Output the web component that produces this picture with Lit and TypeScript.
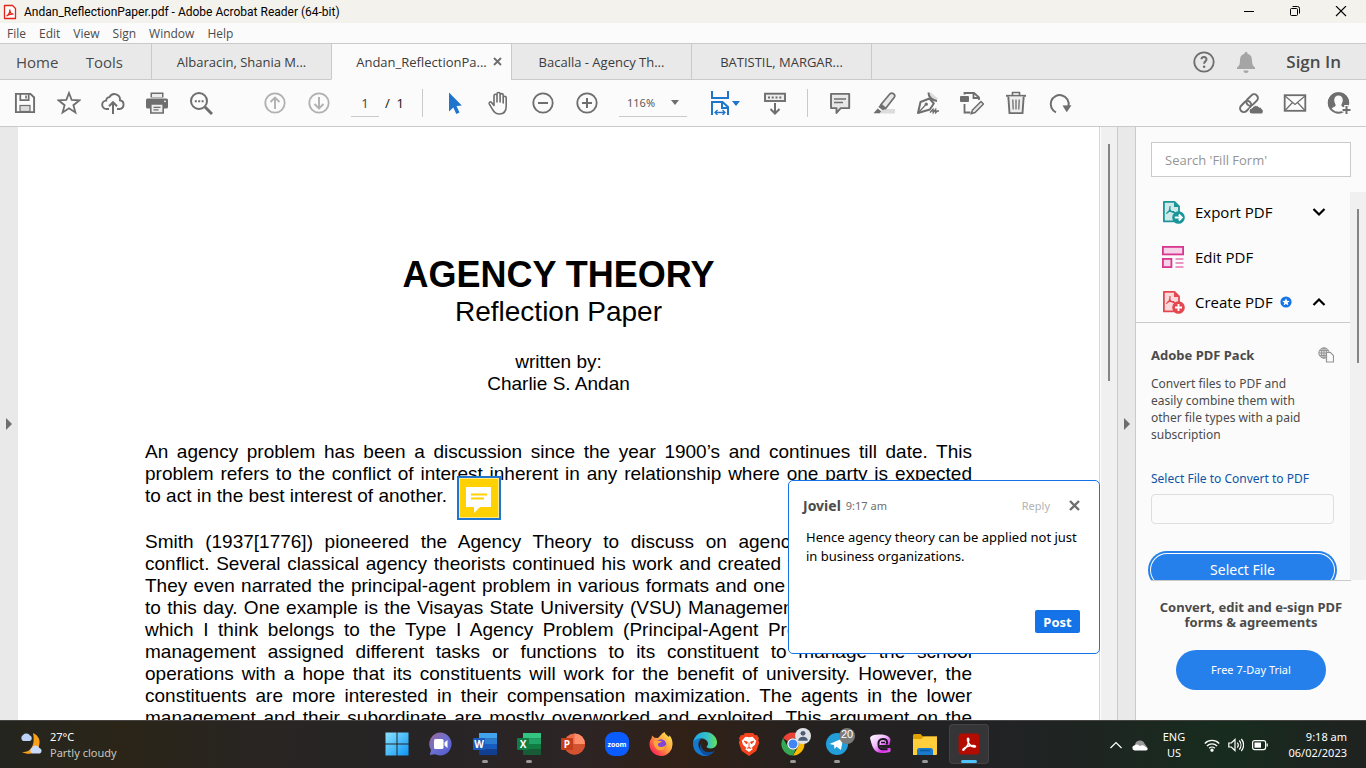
import { LitElement, html, svg, css } from "lit";
import { customElement } from "lit/decorators.js";
import { classMap } from "lit/directives/class-map.js";

const G = "#6e6e6e";

const icon = (body: unknown, size = 24) =>
  html`<svg class="icon" width=${size} height=${size} viewBox="0 0 24 24" fill="none" aria-hidden="true">${body}</svg>`;

const icons = {
  save: svg`<path d="M2.9 2.9h14.6l3.6 3.6v14.6H2.9z" stroke=${G} stroke-width="1.9"/><path d="M7.3 3v6.2h8.4V3" stroke=${G} stroke-width="1.7"/><path d="M13 4.5v3" stroke=${G} stroke-width="1.6"/><rect x="7" y="14.5" width="10" height="6" fill="#dcdcdc" stroke=${G} stroke-width="1.2"/>`,
  star: svg`<path d="M12 2l2.7 7 7.6.4-5.9 4.8 2 7.3-6.4-4.2-6.4 4.2 2-7.3L1.700 9.400l7.600-.4z" stroke=${G} stroke-width="1.8" stroke-linejoin="miter"/>`,
  cloud: svg`<path d="M8 18H5.600a4.200 4.200 0 0 1-.4-8.400 3.400 3.400 0 0 1 3.300-3.500 5.600 5.600 0 0 1 10.500 3.200A4.400 4.400 0 0 1 18.500 18H16" stroke=${G} stroke-width="1.9"/><path d="M12 23V11.500M8 15.200l4-4 4 4" stroke=${G} stroke-width="2"/>`,
  print: svg`<path d="M5.500 1.500h13v5h-13z" fill=${G}/><path d="M7 3h10v3H7z" fill="#ededed"/><rect x="1" y="7.500" width="22" height="10" rx="1.500" fill=${G}/><path d="M5.800 13h12.400v9H5.800z" fill="#ededed" stroke=${G} stroke-width="1.600"/><path d="M8.500 16.300h7M8.500 18.900h5" stroke=${G} stroke-width="1.200"/><circle cx="20" cy="10.300" r=".9" fill="#fff"/>`,
  find: svg`<circle cx="10" cy="10" r="8" stroke=${G} stroke-width="2"/><path d="M16 16l7 7" stroke=${G} stroke-width="3"/><path d="M5.800 9.200h2v2h-2zM9.200 9.200h2v2h-2zM12.600 9.200h2v2h-2z" fill=${G}/>`,
  up: svg`<circle cx="12" cy="12" r="9.700" stroke="#b1b1b1" stroke-width="1.800"/><path d="M12 18V7M7.500 11L12 6.500l4.500 4.500" stroke="#b1b1b1" stroke-width="1.900"/>`,
  down: svg`<circle cx="12" cy="12" r="9.700" stroke="#b1b1b1" stroke-width="1.800"/><path d="M12 6v11M7.500 13l4.500 4.500 4.500-4.500" stroke="#b1b1b1" stroke-width="1.900"/>`,
  cursor: svg`<path d="M6 1.500v19l4.300-4 3 6.500 3.200-1.400-3-6.500 5.300-.5z" fill="#1f74cb"/>`,
  hand: svg`<path d="M7 14.500V4.800a1.500 1.500 0 0 1 3 0V11 3a1.500 1.500 0 0 1 3.100 0v8-6.800a1.500 1.500 0 0 1 3.100 0V12 6.700a1.500 1.500 0 0 1 3 0V15c0 5-2.600 8-6.700 8-3.600 0-5.500-1.700-7-4.700L2.200 12.800c-.6-1.500 1.200-2.600 2.300-1.300z" stroke=${G} stroke-width="1.600" stroke-linejoin="round"/>`,
  minus: svg`<circle cx="12" cy="12" r="9.700" stroke=${G} stroke-width="1.800"/><path d="M7 12h10" stroke=${G} stroke-width="2"/>`,
  plus: svg`<circle cx="12" cy="12" r="9.700" stroke=${G} stroke-width="1.800"/><path d="M7 12h10M12 7v10" stroke=${G} stroke-width="2"/>`,
  fit: svg`<path d="M4 0v7h16V0" stroke="#1f74cb" stroke-width="2"/><path d="M4 24V11h10.500l5.500 5V24M14 11.500V17h6" stroke="#1f74cb" stroke-width="2"/><path d="M7 21.500h10M9.500 19L7 21.500 9.500 24M14.500 19l2.500 2.500-2.500 2.500" stroke="#1f74cb" stroke-width="1.300"/>`,
  scroll: svg`<rect x="2" y="2.700" width="20" height="7.300" stroke=${G} stroke-width="1.900" fill="#eee"/><path d="M5 6.400h2M8.700 6.400h2M12.500 6.400h2M16.300 6.400h2" stroke=${G} stroke-width="2"/><path d="M12 12v10M7.500 18l4.500 4.500 4.500-4.500" stroke=${G} stroke-width="2"/>`,
  comment: svg`<path d="M3 2.900h18.200v14.200h-8.500L8.500 22v-4.900H3z" fill="#e8e8e8" stroke=${G} stroke-width="1.900" stroke-linejoin="round"/><path d="M6 8h12M6 11.500h9" stroke=${G} stroke-width="1.400"/>`,
  marker: svg`<path d="M11.500 18H23v4.500H5z" fill="#dcdcdc"/><path d="M9 13.500l9-10.700c2-2 6 .8 4.300 3.400l-8.700 11.300z" fill="#e8e8e8" stroke=${G} stroke-width="1.700"/><path d="M8.500 13.500l5.300 4.200-3 1.600-4.500-3.300z" fill=${G}/><path d="M5.700 17.500l3.500 2.700-1.700 2H1.500z" fill=${G}/>`,
  sign: svg`<path d="M14 1l8 6.500-3 3-7-6z" fill="#dcdcdc"/><path d="M2 22L4.500 11l9-3.500 4.300 5-4 6z" stroke=${G} stroke-width="2" stroke-linejoin="round"/><path d="M12.500 1.500c-.3 4 3.500 8 8.500 8.500" stroke=${G} stroke-width="2"/><path d="M2.500 21.500l7-7.500" stroke=${G} stroke-width="1.300"/><circle cx="10.300" cy="13.200" r="1.600" fill=${G}/><path d="M14 21.500l3-3 .3 3 2.300-3 .2 3 1.500-1.500H23" stroke=${G} stroke-width="1.500"/>`,
  organize: svg`<rect x="0" y="5" width="9" height="6" rx="1" fill=${G}/><path d="M4.500 3.500V2h9.500l5 4.500V9M13.500 2.200V7H19M4.500 13v8.500h6" stroke=${G} stroke-width="1.800"/><path d="M12.500 19l8.500-8.500 2.500 2.500-8.500 8.500-3.700 1.200z" fill="#e8e8e8" stroke=${G} stroke-width="1.500"/>`,
  trash: svg`<path d="M2 4.800h20" stroke=${G} stroke-width="1.900"/><path d="M8.500 4.500v-3h7v3" stroke=${G} stroke-width="1.600"/><path d="M4.300 5.500l1.200 16.600h13L19.700 5.500" fill="#eee" stroke=${G} stroke-width="1.900"/><path d="M8.800 8.500l.4 10M12 8.500v10M15.200 8.500l-.4 10" stroke=${G} stroke-width="1.300"/>`,
  rotate: svg`<path d="M8 21.300A9 9 0 1 1 20.500 15" stroke=${G} stroke-width="2"/><path d="M14.500 14.500l9-.3-4.800 7z" fill=${G}/>`,
  link: svg`<g stroke=${G} stroke-width="2" transform="rotate(-45 10.500 12)"><rect x="-1" y="8" width="12.500" height="7.500" rx="3.700"/><rect x="8" y="8" width="13" height="7.500" rx="3.700"/></g><path d="M13 23a3 3 0 0 1 0-6 4.500 4.500 0 0 1 7.500-.8c1.500 0 2 .7 2.200 1.700 2.300.6 2.200 5.100-.7 5.100z" fill=${G} stroke="#fbfbfb"/>`,
  mail: svg`<rect x="1.700" y="4.200" width="20.600" height="15.600" stroke=${G} stroke-width="1.800"/><path d="M2 5l10 8.500L22 5M2 19.500l7.500-8M22 19.500l-7.500-8" stroke=${G} stroke-width="1.200"/>`,
  user: svg`<circle cx="11.500" cy="12" r="9.700" stroke=${G} stroke-width="2"/><path d="M11.500 1.500a10 10 0 0 0-7.800 16.800c1.800-2.300 4.800-2.300 5-4.300-.4-1.500-1.500-2.500-1.500-4.700 0-3 1.800-4.800 4.300-4.800s4.300 1.800 4.300 4.800c0 2.200-1.100 3.200-1.500 4.700.2 2 3.200 2 5 4.300A10 10 0 0 0 11.500 1.500z" fill=${G}/><path d="M19.500 14v9M15 18.500h9" stroke="#fbfbfb" stroke-width="4.500"/><path d="M19.500 15v8M15.500 19h8" stroke=${G} stroke-width="2"/>`,
};

type IconName = keyof typeof icons;

const glyph = svg`<path d="M5 13.500c2.500-1 4.200-3.700 4-7.500M8.700 9c.8 2.600 2.800 3.700 5.300 3.300M6 12.300c2-1.200 4.500-1.200 7-.8" stroke="currentColor" stroke-width="1.200"/>`;

const LINES_INTRO = [
  "An agency problem has been a discussion since the year 1900’s and continues till date. This",
  "problem refers to the conflict of interest inherent in any relationship where one party is expected",
  "to act in the best interest of another.",
];
const LINES_BODY = [
  "Smith (1937[1776]) pioneered the Agency Theory to discuss on agency problem and their",
  "conflict. Several classical agency theorists continued his work and created fundamental theories.",
  "They even narrated the principal-agent problem in various formats and one of them still exists up",
  "to this day. One example is the Visayas State University (VSU) Management and its organization",
  "which I think belongs to the Type I Agency Problem (Principal-Agent Problem) since its own",
  "management assigned different tasks or functions to its constituent to manage the school",
  "operations with a hope that its constituents will work for the benefit of university. However, the",
  "constituents are more interested in their compensation maximization. The agents in the lower",
  "management and their subordinate are mostly overworked and exploited. This argument on the",
];

@customElement("reader-toolbar")
class ReaderToolbar extends LitElement {
  static styles = css`
    :host { display: flex; align-items: center; height: 46px; padding: 0 5px 0 3px; background: #fbfbfb; border-bottom: 1px solid #cacaca; font: 12px "Noto Sans", sans-serif; color: #4b4b4b; }
    button { width: 44px; height: 40px; padding: 0; border: 0; background: none; display: flex; align-items: center; justify-content: center; }
    .group { display: flex; }
    .nav { margin-left: 30px; }
    .page { box-sizing: border-box; width: 28px; height: 28px; margin-left: 10px; padding: 0; border: 0; border-bottom: 1px solid #cacaca; background: none; text-align: center; font: inherit; font-size: 13px; color: #4b4b4b; }
    .total { width: 43px; padding-left: 6px; box-sizing: border-box; font-size: 13px; color: #222; white-space: pre; }
    .sep { width: 1px; height: 28px; margin-right: 10px; background: #cacaca; }
    .zoom { display: flex; align-items: center; width: 68px; height: 28px; margin: 0 10px; border-bottom: 1px solid #cacaca; box-sizing: border-box; }
    select { appearance: none; flex: 1; min-width: 0; padding: 0 0 0 8px; border: 0; background: none; font: inherit; font-size: 11px; color: #5a5a5a; }
    .caret { width: 0; height: 0; border: 4px solid transparent; border-top: 5px solid #6e6e6e; border-bottom: 0; margin-right: 8px; }
    .fit { width: 56px; }
    .fit .caret { border-top-color: #1f74cb; margin: 0 3px 0 0; }
    .scroll { margin-right: 10px; }
    .right { margin-left: auto; }
  `;
  private tool(name: IconName, label: string, cls = "") {
    return html`<button class=${cls} aria-label=${label}>${icon(icons[name])}</button>`;
  }
  render() {
    return html`
      <div class="group">${this.tool("save", "Save")}${this.tool("star", "Star")}${this.tool("cloud", "Upload")}${this.tool("print", "Print")}${this.tool("find", "Find")}</div>
      <div class="group nav">${this.tool("up", "Previous page")}${this.tool("down", "Next page")}</div>
      <input class="page" aria-label="Page number" value="1" />
      <span class="total">/  1</span>
      <div class="sep"></div>
      <div class="group">${this.tool("cursor", "Select")}${this.tool("hand", "Pan")}${this.tool("minus", "Zoom out")}${this.tool("plus", "Zoom in")}</div>
      <div class="zoom"><select aria-label="Zoom level"><option>116%</option></select><span class="caret"></span></div>
      <button class="fit" aria-label="Fit width">${icon(icons.fit)}<span class="caret"></span></button>
      ${this.tool("scroll", "Page display", "scroll")}
      <div class="sep"></div>
      <div class="group">${this.tool("comment", "Comment")}${this.tool("marker", "Highlight")}${this.tool("sign", "Sign")}${this.tool("organize", "Edit pages")}${this.tool("trash", "Delete")}${this.tool("rotate", "Rotate")}</div>
      <div class="group right">${this.tool("link", "Share link")}${this.tool("mail", "Send by email")}${this.tool("user", "Add people")}</div>
    `;
  }
}

@customElement("document-view")
class DocumentView extends LitElement {
  static styles = css`
    :host { display: flex; flex: 1; min-width: 0; overflow: hidden; background: #fff; }
    .gutter { width: 18px; background: #e9e9e9; display: flex; align-items: center; justify-content: center; flex: none; border: 0; padding: 0; }
    .sheet { position: relative; flex: 1; min-width: 0; padding: 129px 127px 0; font: 19px/22px "Liberation Sans", Arial, sans-serif; color: #000; border-right: 1px solid #d4d4d4; }
    h1 { margin: 0; font-size: 36px; line-height: 38px; text-align: center; }
    h2 { margin: 0 0 22px; font-size: 28px; line-height: 35px; font-weight: 400; text-align: center; }
    .by { margin: 0 0 46px; text-align: center; }
    p { margin: 0 0 24px; }
    .line { display: block; white-space: nowrap; text-align: justify; text-align-last: justify; }
    .short { text-align-last: left; }
    .note { position: absolute; left: 439px; top: 349px; width: 44px; height: 44px; box-sizing: border-box; padding: 0; border: 2px solid #1f74cb; background: #ffd100; box-shadow: inset 0 0 0 1px #ffe98a; }
    .note svg { display: block; margin: auto; }
    .popup { position: absolute; right: -1px; top: 353px; width: 312px; height: 174px; box-sizing: border-box; padding: 14px 19px 20px 14px; display: flex; flex-direction: column; border: 1px solid #1473e6; border-radius: 5px; background: #fff; font: 12px/19px "Noto Sans", sans-serif; }
    .head { display: flex; align-items: center; gap: 5px; height: 20px; }
    .name { font-size: 14px; font-weight: 700; color: #4b4b4b; }
    .time { font-size: 11px; color: #6e6e6e; }
    .head button { border: 0; padding: 0; background: none; font: inherit; font-size: 11px; color: #b3b3b3; }
    .head .reply { margin-left: auto; }
    .head .x { display: flex; margin-left: 14px; }
    .msg { flex: 1; margin: 13px 0 0 3px; font-size: 13px; }
    .post { align-self: flex-end; width: 45px; height: 23px; padding: 0; border: 0; border-radius: 2px; background: #1473e6; color: #fff; font: 700 13px "Noto Sans", sans-serif; }
    .track { width: 18px; flex: none; background: #f0f0f0; border-left: 1px solid #fff; border-right: 1px solid #cacaca; box-sizing: border-box; }
    .thumb { width: 2px; height: 237px; margin: 17px 0 0 7px; background: #858585; }
    .right { border-right: 1px solid #cacaca; }
  `;
  private arrow() {
    return html`<svg width="6" height="12" viewBox="0 0 6 12"><path d="M0 0l6 6-6 6z" fill=${G} /></svg>`;
  }
  render() {
    return html`
      <button class="gutter" aria-label="Open left pane">${this.arrow()}</button>
      <article class="sheet">
        <h1>AGENCY THEORY</h1>
        <h2>Reflection Paper</h2>
        <div class="by">written by:<br />Charlie S. Andan</div>
        <p>${LINES_INTRO.map((t, i) => html`<span class=${classMap({ line: true, short: i === 2 })}>${t}</span>`)}</p>
        <p>${LINES_BODY.map((t) => html`<span class="line">${t}</span>`)}</p>
        <button class="note" aria-label="Comment note">
          <svg width="38" height="38" viewBox="0 0 38 38"><path d="M6 8h25v20H20l-6 6v-6H6z" fill="#fff" /><path d="M11 15.500h16M11 19.500h13" stroke="#ffd100" stroke-width="2" /></svg>
        </button>
        <section class="popup">
          <div class="head">
            <span class="name">Joviel</span><span class="time">9:17 am</span>
            <button class="reply">Reply</button>
            <button class="x" aria-label="Close"><svg width="11" height="11" viewBox="0 0 11 11"><path d="M1 1l9 9M10 1l-9 9" stroke=${G} stroke-width="2.400" /></svg></button>
          </div>
          <div class="msg">Hence agency theory can be applied not just in business organizations.</div>
          <button class="post">Post</button>
        </section>
      </article>
      <div class="track"><div class="thumb"></div></div>
      <button class="gutter right" aria-label="Toggle tools pane">${this.arrow()}</button>
    `;
  }
}

@customElement("tools-pane")
class ToolsPane extends LitElement {
  static styles = css`
    :host { display: flex; flex-direction: column; width: 230px; flex: none; background: #fbfbfb; font: 12px/17px "Noto Sans", sans-serif; color: #4b4b4b; }
    .search { height: 35px; margin: 15px 15px 13px; padding: 0 13px; box-sizing: border-box; border: 1px solid #cacaca; background: #fff; font: 13px "Open Sans", sans-serif; }
    .search::placeholder { color: #959595; opacity: 1; }
    .scroller { display: flex; height: 390px; overflow: hidden; }
    .list { flex: 1; min-width: 0; }
    .track { width: 16px; margin-top: 2px; background: #f0f0f0; }
    .thumb { width: 2px; height: 154px; margin: 17px 0 0 7px; background: #858585; }
    .row { display: flex; align-items: center; width: 100%; height: 45px; padding: 0 24px 2px 25px; border: 0; background: none; font: 15px "Open Sans", sans-serif; color: #000; text-align: left; }
    .row .text { margin-left: 10px; }
    .row .chev { margin-left: auto; }
    .row .badge { margin-left: 7px; }
    .list .open { border-bottom: 1px solid #cacaca; height: 43px; padding-top: 2px; padding-bottom: 0; }
    .teal { color: #1b959a; } .red { color: #e34850; }
    .body { padding: 24px 16px 0 15px; }
    .head { display: flex; justify-content: space-between; font-size: 13px; font-weight: 700; }
    .desc { margin: 11px 0 27px; white-space: nowrap; }
    label { display: block; color: #0d55a5; }
    .file { display: block; width: 100%; height: 30px; box-sizing: border-box; margin: 7px 0 30px; border: 1px solid #dedede; border-radius: 4px; background: #fbfbfb; }
    .select { display: block; width: 100%; height: 32px; padding: 0 0 2px; border: 0; border-radius: 16px; background: #2680eb; color: #fff; font: 14px "Noto Sans", sans-serif; box-shadow: 0 0 0 1px #fff, 0 0 0 3px #2680eb; }
    .promo { margin: 0 15px; border-top: 1px solid #cacaca; padding-top: 19px; text-align: center; font-size: 13px; font-weight: 700; line-height: 15px; white-space: nowrap; }
    .trial { display: block; width: 150px; height: 40px; margin: 20px auto 0; padding: 0 0 2px; border: 0; border-radius: 20px; background: #2680eb; color: #fff; font: 11px "Noto Sans", sans-serif; }
  `;
  private chevron(up: boolean) {
    return html`<svg class="chev" width="14" height="10" viewBox="0 0 14 10"><path d=${up ? "M1.500 8L7 2.500 12.500 8" : "M1.500 2L7 7.500 12.500 2"} stroke="#000" stroke-width="2.200" fill="none" /></svg>`;
  }
  private pdf(cls: string, fill: string, plus: boolean) {
    return html`<svg class=${cls} width="24" height="24" viewBox="0 0 24 24" fill="none"><path d="M2.900 1.900h10.600l4.500 4.500v15H2.900z" fill=${fill} stroke="currentColor" stroke-width="1.800" stroke-linejoin="round" />${glyph}<path d="M13 2v5h5z" fill="currentColor" /><circle cx="17.500" cy="17.500" r="6.300" fill="currentColor" /><path d=${plus ? "M17.500 14v7M14 17.500h7" : "M13.800 17.500h6.500M17.800 14.500l3 3-3 3"} stroke="#fff" stroke-width="1.900" /></svg>`;
  }
  render() {
    return html`
      <input class="search" aria-label="Search tools" placeholder="Search 'Fill Form'" />
      <div class="scroller">
        <div class="list">
          <button class="row">${this.pdf("teal", "#cfe8e8", false)}<span class="text">Export PDF</span>${this.chevron(false)}</button>
          <button class="row">
            <svg width="24" height="24" viewBox="0 0 24 24" fill="#f6d3e8" stroke="#d83790" stroke-width="1.800"><rect x="1.900" y="1.900" width="20.200" height="7.500" /><rect x="1.900" y="13.900" width="8.500" height="8.200" /><path d="M14.500 14h8M14.500 18h8M14.500 22h8" stroke-width="1.200" /></svg>
            <span class="text">Edit PDF</span>
          </button>
          <button class="row open">
            ${this.pdf("red", "#f9d9da", true)}<span class="text">Create PDF</span>
            <svg class="badge" width="12" height="12" viewBox="0 0 12 12"><circle cx="6" cy="6" r="5.600" fill="#1473e6" /><path d="M6 2.300l1.100 2.500 2.700.2-2.100 1.800.7 2.600L6 8l-2.400 1.400.7-2.600L2.200 5l2.700-.2z" fill="#fff" /></svg>
            ${this.chevron(true)}
          </button>
          <div class="body">
            <div class="head">Adobe PDF Pack
              <svg width="16" height="16" viewBox="0 0 16 16" fill="none" stroke="#959595"><circle cx="6" cy="6" r="5.200" fill="#e4e4e4" /><path d="M6 1v10M1 6h10M1.800 3.500h8.400M1.800 8.500h8.400" /><ellipse cx="6" cy="6" rx="2.500" ry="5" /><path d="M8.500 5.500h4l3 3v6.500h-7z" fill="#fbfbfb" stroke-width="1.200" /></svg>
            </div>
            <div class="desc">Convert files to PDF and<br />easily combine them with<br />other file types with a paid<br />subscription</div>
            <label for="file">Select File to Convert to PDF</label>
            <input class="file" id="file" />
            <button class="select">Select File</button>
          </div>
        </div>
        <div class="track"><div class="thumb"></div></div>
      </div>
      <div class="promo">Convert, edit and e-sign PDF<br />forms &amp; agreements</div>
      <button class="trial">Free 7-Day Trial</button>
    `;
  }
}

const office = (letter: string, dark: string, bands: string[], round = false) => svg`
  ${round
    ? svg`<circle cx="13.500" cy="12" r="10.500" fill=${bands[0]}/><path d="M13.500 1.500A10.500 10.500 0 0 1 24 12H13.500z" fill=${bands[1]}/><path d="M3 12h21a10.500 10.500 0 0 1-21 0z" fill=${bands[2]}/>`
    : bands.map((c, i) => svg`<rect x="6" y=${1 + i * 5.5} width="18" height="5.600" fill=${c}/>`)}
  <rect x="0" y="6" width="12" height="12" rx="1" fill=${dark}/>
  <text x="6" y="15.500" text-anchor="middle" font-family="Open Sans, sans-serif" font-weight="700" font-size="10" fill="#fff">${letter}</text>`;

const apps = [
  { name: "Start", art: svg`<defs><linearGradient id="w" x1="0" y1="0" x2="1" y2="1"><stop stop-color="#8be3ff"/><stop offset="1" stop-color="#0d95f5"/></linearGradient></defs><path d="M.5.500h11v11H.500zM12.500.500h11v11h-11zM.5 12.500h11v11H.500zM12.500 12.500h11v11h-11z" fill="url(#w)"/>` },
  { name: "Chat", art: svg`<defs><linearGradient id="c" x1="0" y1="0" x2="1" y2="1"><stop stop-color="#a0669a"/><stop offset=".5" stop-color="#6d6fd0"/><stop offset="1" stop-color="#4d59cf"/></linearGradient></defs><path d="M12 .5A11.500 11.500 0 1 1 6 22.300L.800 23 2 18A11.500 11.500 0 0 1 12 .5z" fill="url(#c)"/><rect x="5" y="7" width="9.500" height="10" rx="1.500" fill="#fff"/><path d="M15.500 10.500l3-2.500v8l-3-2.500z" fill="#fff"/>` },
  { name: "Word", run: true, art: office("W", "#185abd", ["#41a5ee", "#2b7cd3", "#185abd", "#103f91"]) },
  { name: "Excel", run: true, art: office("X", "#107c41", ["#33c481", "#21a366", "#107c41", "#185c37"]) },
  { name: "PowerPoint", art: office("P", "#c43e1c", ["#ed6c47", "#ff8f6b", "#d35230"], true) },
  { name: "Zoom", art: svg`<rect width="24" height="24" rx="9" fill="#0b5cff"/><text x="12" y="14.500" text-anchor="middle" font-family="Open Sans, sans-serif" font-weight="700" font-size="7" fill="#fff">zoom</text>` },
  { name: "Firefox", art: svg`<defs><linearGradient id="f" x1="1" y1="0" x2="0" y2="1"><stop stop-color="#fff44f"/><stop offset=".5" stop-color="#ff9640"/><stop offset=".8" stop-color="#ff3750"/><stop offset="1" stop-color="#e31587"/></linearGradient></defs><path d="M15.500 0c.5 2.300 3 3.500 4.600 5l.4-1.800c2 2.300 3.200 5.600 3 8.800A11.500 11.500 0 0 1 .5 13C.4 9.500 1.500 7.500 2.700 6L3 3.500l2.500 2.300 3.500.2C11 4.300 12.500 1.500 15.500 0z" fill="url(#f)"/><circle cx="12" cy="12.500" r="5.300" fill="#8046d8"/><path d="M4.500 8.500c3-1 5 .5 8 .5.500 1.500-2.500 1.800-3.300 2.500-.9 2 .8 3.500 3 3.500 2.500 0 4-1 5-2.500-.3 4.500-4 6.500-7 5.700-4-1-6-5-5.700-9.700z" fill="#ffa436"/>` },
  { name: "Edge", art: svg`<defs><linearGradient id="e" x1="0" y1="0" x2="1" y2="0"><stop stop-color="#1ca4e8"/><stop offset=".6" stop-color="#35c1c8"/><stop offset="1" stop-color="#66e257"/></linearGradient></defs><path d="M0 11C.8 4.500 5.500 0 12 0c7 0 12 5 12 10.300 0 4-2.800 6.200-6 6.200-2.800 0-4.500-1-4.300-2 .2-.7 1.300-1 1.300-3 0-2.200-2.500-5-6.500-5C5 6.500 1.800 8 0 11z" fill="url(#e)"/><path d="M0 11c1.500-3.300 5-4.500 8.500-4.500C6 8.500 5 11 5.600 14.500c1 5 6.400 8.500 12.400 7.200C16 23.200 14 24 12 24 5 24-.5 18.500 0 11z" fill="#1478ce"/><path d="M8.500 11c-1.500 5 2.500 9.200 7 9.200 2.800 0 4.800-.6 6.500-1.700C20 21.700 16.500 24 13 23.500 7.500 22.500 5.300 15 8.500 11z" fill="#0c4fa0"/>` },
  { name: "Brave", art: svg`<path d="M8 1h8l2 2.200 2-.2 2 3.200-.7 1.700.9 2.800-3 8.300L12 24l-7.200-5-3-8.300.9-2.800L2 6.200 4 3l2 .2z" fill="#f4431c"/><path d="M12 5.300l3.500-.6 3.700 4-1.200 4-3.300 3 1 1.600L12 20l-3.700-2.700 1-1.600-3.300-3-1.200-4 3.700-4z" fill="#fff"/><path d="M7 9l3.500 1-1 2zM17 9l-3.500 1 1 2zM12 10.500V15M9.800 16.500L12 15.200l2.200 1.300" stroke="#f4431c" stroke-width=".8" fill="#f4431c"/>` },
  { name: "Chrome", run: true, badge: "user", art: svg`<path d="M12 .5a11.500 11.500 0 0 1 10 5.800H12a5.800 5.800 0 0 0-5 3L2 6.200A11.500 11.500 0 0 1 12 .5z" fill="#ea4335"/><path d="M22 6.300A11.500 11.500 0 0 1 12 23.500l5-8.600a5.800 5.800 0 0 0 0-6z" fill="#fbbc04"/><path d="M2 6.200l5 8.700a5.800 5.800 0 0 0 7.700 2.200L12 23.500A11.500 11.500 0 0 1 2 6.200z" fill="#34a853"/><circle cx="12" cy="12" r="5.800" fill="#fff"/><circle cx="12" cy="12" r="4.500" fill="#4285f4"/>` },
  { name: "Telegram", run: true, badge: "20", art: svg`<circle cx="12" cy="12" r="11" fill="#229ed9"/><path d="M4.500 12L18 6.300 16 18l-4.500-3.200-2 2.200-.5-4z" fill="#fff"/>` },
  { name: "Game", art: svg`<defs><linearGradient id="g" x1="0" y1="0" x2="1" y2="1"><stop stop-color="#fff"/><stop offset=".45" stop-color="#f3b8ff"/><stop offset=".75" stop-color="#d42be0"/><stop offset="1" stop-color="#e86cf0"/></linearGradient></defs><path d="M1 6c1-3 5-3.500 10-3.500S21 4 21.500 8l-1 5H10.500c0 2.500 2 3.200 4.500 3h6.500v3.500c-3 1.500-8 2-12 1C4 19 2.500 12 1 6z" fill="url(#g)"/><path d="M9.500 12.500c-.5-3.500 1.500-5.500 4.500-5.500 2.700 0 4.500 1.500 4 4l-.5 1.500M9.500 12.500c0 3.500 2 4.800 5 4.800h4" fill="none" stroke="#1c1420" stroke-width="2"/><path d="M12 10.500h4" stroke="#1c1420" stroke-width="1.500"/>` },
  { name: "File Explorer", run: true, art: svg`<path d="M0 3.500a1.500 1.500 0 0 1 1.500-1.500h6L10 4.500h14V10H0z" fill="#e0a100"/><path d="M0 7h8.500L10.500 4.500H24V22a1 1 0 0 1-1 1H0z" fill="#ffce3c"/><path d="M4 23v-4.500A2.500 2.500 0 0 1 6.500 16h11a2.500 2.500 0 0 1 2.500 2.500V23z" fill="#1979ca"/><path d="M7 18.500h10" stroke="#0c5a9f" stroke-width="1.500"/>` },
  { name: "Acrobat", active: true, art: svg`<rect x="1.500" y="1.500" width="21" height="21" rx="3.500" fill="#b30b00"/><path d="M6 18c3-1 5.800-5.700 5.800-10.500 0-2-1.800-1.500-1.300.5.800 4 4 6.500 6.500 7 2.300.4 2-1.700-.5-1.600C12.500 13.500 8 15 6.300 17c-1 1.300 0 1.600 1 .5" stroke="#fff" stroke-width="1.500" fill="none"/>` },
] as { name: string; art: unknown; run?: boolean; active?: boolean; badge?: string }[];

@customElement("task-bar")
class TaskBar extends LitElement {
  static styles = css`
    :host { display: grid; grid-template-columns: 1fr auto 1fr; align-items: center; height: 48px; flex: none; box-sizing: border-box; border-top: 1px solid #454442; background: linear-gradient(90deg, #24251f 0, #2b2518 9%, #282522 18%, #272426 30%, #2c2425 42%, #312117 50%, #242120 60%, #222225 72%, #1e2521 80%, #172c1e 90%, #1e2320 98%); color: #fff; font: 11px/16px "Noto Sans", sans-serif; }
    .weather { display: flex; align-items: center; gap: 7px; padding-left: 18px; }
    .dim { color: #c6c6c2; }
    .apps { display: flex; }
    .app { position: relative; width: 44px; height: 47px; padding: 0 0 1px; border: 0; background: none; display: flex; align-items: center; justify-content: center; }
    .app svg { display: block; }
    .app.active::before { content: ""; position: absolute; inset: 3px 2px 4px; border-radius: 4px; background: rgba(255, 255, 255, 0.09); border: 1px solid rgba(255, 255, 255, 0.07); }
    .app.active svg { position: relative; }
    .app.run::after, .app.active::after { content: ""; position: absolute; bottom: 5px; left: 19px; width: 6px; height: 3px; border-radius: 2px; background: #9a9a9a; }
    .app.active::after { left: 14px; width: 16px; background: #4cc2ff; }
    .badge { position: absolute; top: 7px; right: 4px; width: 16px; height: 16px; border-radius: 8px; background: #7b7b7b; color: #fff; font-size: 11px; text-align: center; }
    .badge.user { background: #dfe3e8; }
    .tray { display: flex; align-items: center; justify-content: flex-end; padding-right: 19px; }
    .lang { width: 32px; text-align: center; margin: 0 14px 0 2px; }
    .tray svg { margin-right: 8px; }
    .clock { width: 71px; text-align: right; white-space: nowrap; }
  `;
  render() {
    return html`
      <div class="weather">
        <svg width="25" height="25" viewBox="0 0 25 25"><path d="M15 1c5 2 8 7 6 13-2 7-10 10-17 6 7 1 14-5 11-19z" fill="#f9a01b" /><path d="M5 9a3.500 3.500 0 0 1 0-6A4.500 4.500 0 0 1 12 3.500 3 3 0 0 1 12 9z" fill="#bcd2f7" /><path d="M14 21.500a3.500 3.500 0 0 1 0-6 4.300 4.300 0 0 1 7.500.5 3 3 0 0 1 .5 5.500z" fill="#c9dafa" /></svg>
        <div>27°C<div class="dim">Partly cloudy</div></div>
      </div>
      <div class="apps">
        ${apps.map((a) => html`<button class=${classMap({ app: true, run: !!a.run, active: !!a.active })} aria-label=${a.name}>
          ${icon(a.art)}
          ${a.badge === "20" ? html`<span class="badge">20</span>` : ""}
          ${a.badge === "user" ? html`<span class="badge user"><svg width="16" height="16" viewBox="0 0 15 15"><circle cx="7.500" cy="5" r="2.300" fill="#4f5d73" /><path d="M3 12c0-5 9-5 9 0z" fill="#4f5d73" /></svg></span>` : ""}
        </button>`)}
      </div>
      <div class="tray">
        <svg width="16" height="16" viewBox="0 0 16 16" fill="none"><path d="M2.500 11L8 5.500l5.500 5.500" stroke="#fff" stroke-width="1.200" /></svg>
        <svg width="16" height="16" viewBox="0 0 16 16"><path d="M3 7.500a5 5 0 0 1 9.500-1L15 10 5 11z" fill="#9a9a9a" /><path d="M2.500 13.500a2.700 2.700 0 0 1 0-5.300c2-1.500 4-.5 5.500.800 3-2 5 0 5.500 1 2.500-.5 3 3.500.5 3.500z" fill="#fff" /></svg>
        <div class="lang">ENG<br />US</div>
        <svg width="16" height="16" viewBox="0 0 16 16" fill="none" stroke="#fff" stroke-width="1.300"><path d="M.8 6.500a10 10 0 0 1 14.400 0M3 9a7 7 0 0 1 10 0M5.200 11.300a4 4 0 0 1 5.600 0" /><circle cx="8" cy="13.200" r="1" fill="#fff" /></svg>
        <svg width="16" height="16" viewBox="0 0 16 16" fill="none" stroke="#fff" stroke-width="1.200"><path d="M.8 6h2.500L7 2.500v11L3.300 10H.8zM9.300 5.500a4 4 0 0 1 0 5M11.300 3.500a7 7 0 0 1 0 9M13.300 2a9 9 0 0 1 0 12" /></svg>
        <svg width="16" height="16" viewBox="0 0 16 16" fill="none" stroke="#fff" stroke-width="1.200"><rect x=".6" y="3.600" width="13" height="9" rx="2" /><rect x="2.500" y="5.500" width="6.500" height="5.200" fill="#fff" stroke="none" /><path d="M15.200 6.500v3" /></svg>
        <div class="clock">9:18 am<br />06/02/2023</div>
      </div>
    `;
  }
}

@customElement("app-root")
class AppRoot extends LitElement {
  static styles = css`
    :host { display: flex; flex-direction: column; height: 100vh; overflow: hidden; background: #fbfbfb; font: 13px "Open Sans", sans-serif; color: #4b4b4b; }
    button { border: 0; padding: 0; background: none; font: inherit; color: inherit; }
    .title { display: flex; align-items: center; gap: 7px; height: 23px; padding: 0 19px 0 3px; background: #f4f2ed; color: #000; font: 12px Roboto, sans-serif; }
    .win { display: flex; gap: 34px; margin-left: auto; }
    .win button { display: flex; }
    .menu { display: flex; align-items: center; gap: 13px; height: 20px; padding: 0 7px; font-size: 12px; border-bottom: 1px solid #cacaca; }
    .tabs { display: flex; height: 36px; background: #e9e9e9; }
    .main { display: flex; width: 151px; padding: 0 28px 0 16px; box-sizing: border-box; align-items: center; justify-content: space-between; font-size: 15px; border-bottom: 1px solid #cacaca; }
    .tab { display: grid; grid-template-columns: 18px 1fr 18px; align-items: center; width: 180px; box-sizing: border-box; border-left: 1px solid #cacaca; border-bottom: 1px solid #cacaca; white-space: nowrap; text-align: center; color: #3c3c3c; }
    .tab span { grid-column: 2; }
    .tab.on { background: #fbfbfb; border-bottom-color: #fbfbfb; }
    .close { display: flex; }
    .account { flex: 1; display: flex; align-items: center; justify-content: flex-end; padding-right: 25px; border-left: 1px solid #cacaca; border-bottom: 1px solid #cacaca; }
    .account .icon { display: block; }
    .bell { margin: 0 28px 0 18px; }
    .signin { font-size: 17px; font-weight: 600; }
    .work { display: flex; flex: 1; min-height: 0; }
  `;
  render() {
    const tabs = ["Albaracin, Shania M...", "Andan_ReflectionPa...", "Bacalla - Agency Th...", "BATISTIL, MARGAR..."];
    return html`
      <header class="title">
        <svg width="14" height="16" viewBox="0 0 14 16" fill="none"><path d="M1.500 1.500h8l3 3v10h-11z" stroke="#e2231a" stroke-width="1.300" fill="#fff" stroke-linejoin="round" /><path d="M3.500 12c2-1 3.500-3.500 3.300-6.500 0 2.500 1.500 4.500 3.700 4.700-2-.3-4.700 0-7 1.800z" stroke="#e2231a" stroke-width="1.300" /></svg>
        <span>Andan_ReflectionPaper.pdf - Adobe Acrobat Reader (64-bit)</span>
        <div class="win">
          <button aria-label="Minimize"><svg width="12" height="12" viewBox="0 0 12 12"><path d="M1 5.500h10" stroke="#000" /></svg></button>
          <button aria-label="Restore"><svg width="12" height="12" viewBox="0 0 12 12" fill="none" stroke="#000"><rect x="1.500" y="2.500" width="7" height="7" rx="1" /><path d="M3.500.5h5a2 2 0 0 1 2 2v5" /></svg></button>
          <button aria-label="Close"><svg width="12" height="12" viewBox="0 0 12 12"><path d="M1 0l10 10M11 0L1 10" stroke="#000" stroke-width="1.100" /></svg></button>
        </div>
      </header>
      <nav class="menu">${["File", "Edit", "View", "Sign", "Window", "Help"].map((m) => html`<button>${m}</button>`)}</nav>
      <nav class="tabs">
        <div class="main"><button>Home</button><button>Tools</button></div>
        ${tabs.map((t, i) => html`<div class=${classMap({ tab: true, on: i === 1 })}><span>${t}</span>${i === 1
          ? html`<button class="close" aria-label="Close tab"><svg width="9" height="9" viewBox="0 0 9 9"><path d="M1 1l7 7M8 1L1 8" stroke=${G} stroke-width="1.800" /></svg></button>` : ""}</div>`)}
        <div class="account">
          <button aria-label="Help">${icon(svg`<circle cx="12" cy="12" r="9.700" stroke=${G} stroke-width="1.800"/><path d="M9.500 9.200c.2-3 5.300-2.700 5 .2-.2 1.800-2.400 2-2.400 4.400" stroke=${G} stroke-width="2"/><circle cx="12.100" cy="16.700" r="1.300" fill=${G}/>`)}</button>
          <button class="bell" aria-label="Notifications">${icon(svg`<path d="M12 2c1 0 1.500.7 1.500 1.700 3.500.8 4.500 3.800 4.500 6.800 0 4 1 5.500 3 7V19H3v-1.500c2-1.500 3-3 3-7 0-3 1-6 4.500-6.800C10.500 2.700 11 2 12 2zM9.500 20.500h5a2.500 2.500 0 0 1-5 0z" fill="#a5a5a5"/>`)}</button>
          <button class="signin">Sign In</button>
        </div>
      </nav>
      <reader-toolbar></reader-toolbar>
      <main class="work"><document-view></document-view><tools-pane></tools-pane></main>
      <task-bar></task-bar>
    `;
  }
}
